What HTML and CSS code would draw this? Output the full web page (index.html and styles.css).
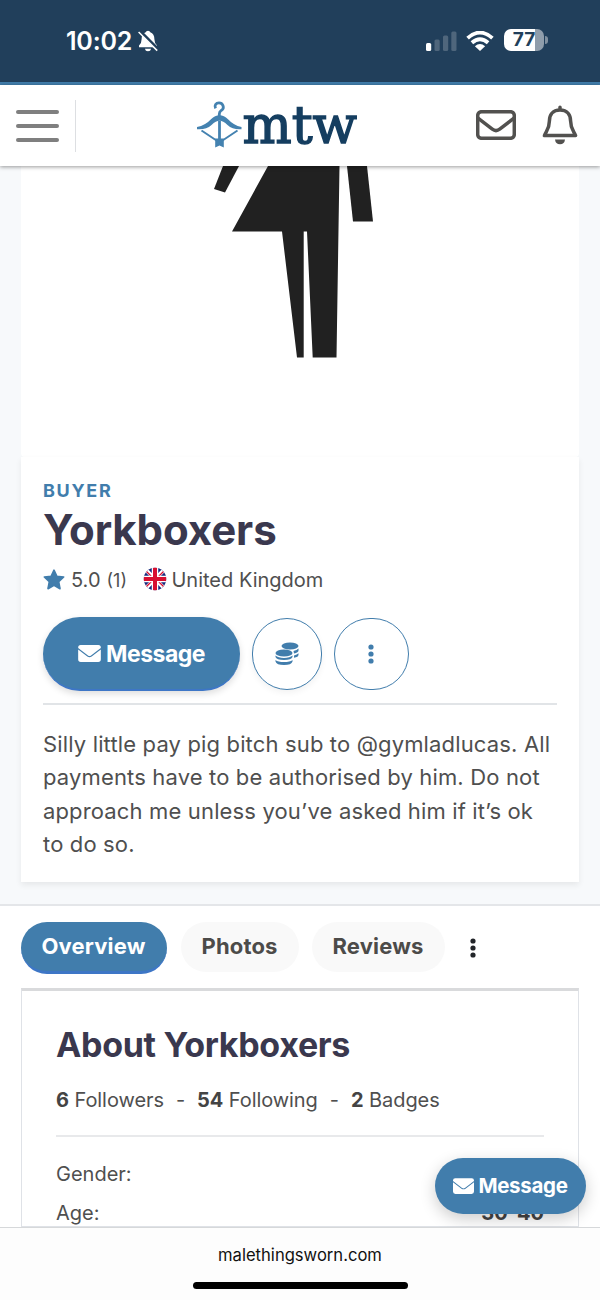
FILE: index.html
```html
<!DOCTYPE html>
<html lang="en">
<head>
<meta charset="utf-8">
<title>Yorkboxers</title>
<link rel="stylesheet" href="styles.css">
</head>
<body>
<svg class="defs" aria-hidden="true">
  <symbol id="mail" viewBox="0 0 24 18"><path d="M2.600 0H21.400Q24 0 24 2.800V3.200L13.600 11.200Q12 12.300 10.400 11.200L0 3.200V2.800Q0 0 2.600 0Z"/><path d="M0 4.700 9.700 12.100Q12 13.600 14.300 12.100L24 4.700V15.200Q24 18 21.200 18H2.800Q0 18 0 15.200Z"/></symbol>
  <symbol id="dots" viewBox="0 0 6 20"><circle cx="3" cy="3" r="2.600"/><circle cx="3" cy="10" r="2.600"/><circle cx="3" cy="17" r="2.600"/></symbol>
</svg>
<div class="screen">
  <div class="status">
    <div class="status-left">
      <span class="clock">10:02</span>
      <svg class="muted" viewBox="0 0 20 22" width="20" height="22"><path fill="#fff" d="M10 .8Q11.900.8 12.300 2.300Q16.400 3.900 16.400 9.200Q16.500 13.500 19 15.600V17.300H1V15.600Q3.600 13.500 3.600 9.200Q3.600 3.900 7.700 2.300Q8.100.8 10 .8ZM6.900 18.700H13.100Q12.600 21.200 10 21.200Q7.400 21.200 6.900 18.700Z"/><path d="M1.400.6 20 19.200" stroke="#213f5b" stroke-width="3.200"/><path d="M.6 2 19.200 20.600" stroke="#fff" stroke-width="1.500"/></svg>
    </div>
    <div class="status-right">
      <svg width="31" height="20" viewBox="0 0 31 20"><rect y="12" width="5.200" height="8" rx="1.500" fill="#fff"/><g fill="#4f667c"><rect x="8.500" y="8.500" width="5.200" height="11.500" rx="1.500"/><rect x="17" y="4.500" width="5.200" height="15.500" rx="1.500"/><rect x="25.300" y="0.500" width="5.200" height="19.500" rx="1.500"/></g></svg>
      <svg class="wifi" width="28" height="20" viewBox="0 0 28 20"><g fill="none" stroke="#fff" stroke-width="3.800"><path d="M1.600 7.200Q14-4 26.400 7.200"/><path d="M5.900 11.700Q14 4.600 22.100 11.700"/></g><path fill="#fff" d="M8.900 15.200Q14 10.900 19.100 15.200L14 20Z"/></svg>
      <span class="battery"><b>77</b></span>
    </div>
  </div>
  <header class="nav">
    <div class="burger"><i></i><i></i><i></i></div>
    <svg class="logo" width="164" height="80" viewBox="0 -13 164 80">
      <g fill="none" stroke="#4482b0"><path stroke-width="2.800" d="M18.600 9.400C17 6.500 19 3.900 22 3.900C26 3.900 27.500 8.500 25.200 10.800C23.500 12.300 22.300 12 22.300 15.200V18"/><path stroke-width="2" d="M4.500 31.500 19.500 41.500M40.500 31.500 25.500 41.500"/><path stroke-width="2.800" d="M22.500 22V42"/></g>
      <path fill="#4482b0" d="M22.500 16.200Q27 16.200 31 20.200Q36.500 26.200 44.500 28V30.200Q36 31 30.500 26Q26 21.800 22.500 21.800Q19 21.800 14.500 26Q9 31 0 30.200V28Q8.500 26.200 14 20.200Q18 16.200 22.500 16.200ZM18.200 39.500H26.800V48.500L22.500 46.500L18.200 48.500Z"/>
      <text x="45.500" y="44" textLength="114.500" lengthAdjust="spacingAndGlyphs">mtw</text>
    </svg>
    <div class="actions">
      <svg width="40" height="30" viewBox="0 0 40 30" fill="none" stroke="#52514f" stroke-width="3.500"><rect x="1.700" y="1.700" width="36.600" height="26.600" rx="3.800"/><path d="M2 8.200 16.300 19.200Q20 22 23.700 19.200L38 8.200"/></svg>
      <svg width="36" height="40" viewBox="0 0 36 40"><path fill="none" stroke="#52514f" stroke-width="3.500" stroke-linejoin="round" stroke-linecap="round" d="M18 2.200V5M18 5C10.500 5 7.400 10.500 7.400 16C7.400 24 4.200 26 2.400 30.600H33.600C31.800 26 28.600 24 28.600 16C28.600 10.500 25.500 5 18 5Z"/><path fill="#52514f" d="M13 34.500H23Q22.500 39.300 18 39.300Q13.500 39.300 13 34.500Z"/></svg>
    </div>
  </header>
  <section class="profile">
    <div class="photo">
      <svg width="558" height="291" viewBox="21 166 558 291"><g fill="#212121"><path d="M223 166H239L225 192.500L214 189Z"/><path d="M268 166H339.500L336.500 357.500H312.700L307 231.500H303.700V357.500H297L282 231.500H232Z"/><path d="M347 166H367L373 221.500H353Z"/></g></svg>
    </div>
    <div class="card">
      <div class="role">BUYER</div>
      <h1>Yorkboxers</h1>
      <div class="meta">
        <svg class="star" width="22" height="21" viewBox="0 0 22 21"><path fill="#417dac" stroke="#417dac" stroke-width="1.600" stroke-linejoin="round" d="M11 1.200 13.800 7.200 20.700 8 15.700 12.700 17 19.700 11 16.300 5 19.700 6.300 12.700 1.300 8 8.200 7.200Z"/></svg>
        <span class="score">5.0</span><span class="count">(1)</span>
        <svg class="flag" width="24" height="24" viewBox="0 0 24 24"><clipPath id="round"><circle cx="12" cy="12" r="11.200"/></clipPath><g clip-path="url(#round)"><path fill="#16297c" d="M0 0H24V24H0Z"/><path stroke="#fff" stroke-width="4" d="M0 0 24 24M24 0 0 24"/><path stroke="#d80f30" stroke-width="1.300" d="M0 1 10 11M24 1 14 11M0 23 10 13M24 23 14 13"/><path stroke="#fff" stroke-width="6.500" d="M12 0V24M0 12H24"/><path stroke="#d80f30" stroke-width="4" d="M12 0V24M0 12H24"/></g></svg>
        <span class="country">United Kingdom</span>
      </div>
      <div class="buttons">
        <button class="primary"><svg width="23" height="17"><use href="#mail"/></svg><span>Message</span></button>
        <button class="ring"><svg width="24" height="24" viewBox="0 0 24 24" fill="#417dac"><ellipse cx="15" cy="4" rx="8.500" ry="3.500"/><ellipse cx="9" cy="11" rx="8.500" ry="3.600"/><path d="M18.500 9Q22 8.300 23.500 6.600V8.500Q23.500 10.600 19 11.600ZM19 13.500Q22 12.800 23.500 11.300V12.700Q23.500 15 19 15.800ZM.5 13.500Q3 15.900 9 15.900Q15 15.900 17.500 13.500V15Q16.500 18 9 18Q1.500 18 .5 15ZM.5 18Q3 20 9 20Q15 20 17.500 18V19.500Q16.500 23 9 23Q1.500 23 .5 19.500Z"/></svg></button>
        <button class="ring wide"><svg width="6" height="20" fill="#417dac"><use href="#dots"/></svg></button>
      </div>
      <p class="bio">Silly little pay pig bitch sub to @gymladlucas. All<br>payments have to be authorised by him. Do not<br>approach me unless you’ve asked him if it’s ok<br>to do so.</p>
    </div>
  </section>
  <nav class="tabs">
    <a class="tab active">Overview</a><a class="tab photos">Photos</a><a class="tab reviews">Reviews</a>
    <svg class="more" width="6" height="20" fill="#222529"><use href="#dots"/></svg>
  </nav>
  <section class="about">
    <h2>About Yorkboxers</h2>
    <div class="stats"><span><b>6</b> Followers</span><span>-</span><span><b>54</b> Following</span><span>-</span><span><b>2</b> Badges</span></div>
    <div class="row"><span>Gender:</span></div>
    <div class="row"><span>Age:</span><b>30-40</b></div>
  </section>
  <button class="floating"><svg width="21" height="16"><use href="#mail"/></svg><span>Message</span></button>
  <footer class="browser"><span>malethingsworn.com</span><i></i></footer>
</div>
</body>
</html>
```
FILE: styles.css
```css
* { box-sizing: border-box; }
body { margin: 0; font-family: Inter, "Liberation Sans", sans-serif; color: #4f4f4f; background: #fff; }
.defs { display: none; }
.screen { position: relative; width: 600px; height: 1300px; overflow: hidden; display: flex; flex-direction: column; }
.screen > * { flex-shrink: 0; }
h1, h2, p { margin: 0; color: #3a384e; }
button { font-family: inherit; padding: 0; border: 0; display: flex; align-items: center; justify-content: center; }

.status { height: 85px; border-bottom: 3px solid #417dab; background: #213f5b; display: flex; justify-content: space-between; padding: 0 56px 0 66px; }
.status-left, .status-right { height: 81px; display: flex; align-items: center; color: #fff; }
.clock { font-size: 25px; font-weight: 600; letter-spacing: -.2px; width: 72px; white-space: nowrap; }
.wifi { margin: 0 10px 0 9px; }
.battery { position: relative; width: 40px; height: 22px; border-radius: 7px; background: linear-gradient(90deg, #fff 31px, #8f9dab 31px); color: #213f5b; font-size: 19px; line-height: 22px; text-align: center; margin-top: -1px; }
.battery::after { content: ""; position: absolute; right: -4px; top: 7px; width: 3px; height: 8px; background: #8090a0; border-radius: 0 4px 4px 0; }

.nav { position: relative; z-index: 2; height: 81px; background: #fff; display: flex; align-items: center; padding: 0 22px 2px 16px; box-shadow: 0 1px 4px #0006; }
.burger { width: 60px; height: 52px; margin-top: 2px; border-right: 1px solid #dddfe2; display: flex; flex-direction: column; justify-content: center; gap: 10px; }
.burger i { width: 43px; height: 4px; border-radius: 2px; background: #7f7f7f; }
.logo { margin: 3px 0 0 121px; }
.logo text { font: 53px "DejaVu Serif", serif; fill: #153e60; stroke: #153e60; stroke-width: 1.5; }
.actions { margin-left: auto; display: flex; align-items: center; gap: 26px; }

.profile { height: 740px; padding: 0 21px; background: #f7f9fb; border-bottom: 2px solid #e4e6e9; }
.photo { height: 291px; background: #fff; border-radius: 0 0 4px 4px; }
.photo svg { display: block; filter: blur(.5px); }
.card { height: 425px; background: #fff; padding: 23px 22px 0; box-shadow: 0 3px 6px #00000012; }
.role { color: #417dac; font-size: 18px; line-height: 22px; font-weight: 700; letter-spacing: 1.7px; }
h1 { font-size: 42px; line-height: 54px; font-weight: 700; margin-top: 1px; letter-spacing: -.1px; }
.meta { height: 45px; padding-top: 1px; display: flex; align-items: center; font-size: 20px; }
.star { margin-top: -2px; }
.score { margin-left: 6px; }
.count { margin-left: 6px; font-size: 18px; }
.flag { margin: 0 4.500px 3px 16px; }
.buttons { height: 103px; border-bottom: 2px solid #e1e4e7; display: flex; gap: 12px; padding-top: 15px; }
.primary { width: 197px; height: 74px; padding-top: 1px; border-radius: 37px; background: #417dac; border-bottom: 2px solid #3d76c6; color: #fff; fill: #fff; font-size: 23px; font-weight: 700; gap: 5px; letter-spacing: -.5px; box-shadow: 0 3px 7px #0002; }
.ring { width: 70px; height: 72px; margin-top: 1px; border: 1.500px solid #417dac; border-radius: 38px; background: #fff; box-shadow: 0 3px 6px #0000000d; }
.wide { width: 75px; margin-left: -.5px; box-shadow: none; }
.bio { margin-top: 22.700px; font-size: 22px; line-height: 33.400px; color: #4f4f4f; letter-spacing: .15px; white-space: nowrap; }

.tabs { height: 82px; padding: 16px 21px 0; display: flex; }
.tab { height: 50px; border-radius: 26px; background: #f9f9f9; font-size: 22px; line-height: 49px; font-weight: 700; letter-spacing: .15px; text-indent: -1px; text-align: center; color: #4c4b49; }
.active { width: 146px; color: #fff; background: #417dac; border-bottom: 3px solid #3d76c6; height: 52px; }
.photos { width: 118px; margin: 0 13px 0 14px; }
.reviews { width: 133px; }
.more { margin: 16px 0 0 25px; }
.about { margin: 0 21px; height: 239px; border: 1px solid #dfe2e7; border-top: 3px solid #d9dadc; padding: 32px 34px 0; overflow: hidden; }
h2 { font-size: 34px; line-height: 44px; font-weight: 700; letter-spacing: -.32px; white-space: nowrap; }
.stats { height: 70px; border-bottom: 2px solid #e8e9eb; display: flex; gap: 12px; font-size: 20px; line-height: 66px; letter-spacing: -.07px; white-space: nowrap; }
.row { display: flex; justify-content: space-between; height: 39px; font-size: 20px; line-height: 39px; position: relative; top: 17.500px; }
b { font-weight: 700; color: #444; }
.battery b { color: #213f5b; font-weight: 700; }
.floating { position: absolute; z-index: 1; left: 435px; top: 1158px; width: 151px; height: 56px; padding-bottom: 1px; border-radius: 28px; background: #417dac; color: #fff; fill: #fff; font-size: 20.500px; font-weight: 700; letter-spacing: -.3px; gap: 4px; box-shadow: 0 5px 16px #0003; }
.browser { position: relative; z-index: 2; height: 73px; border-top: 1px solid #d6d8da; background: #fdfdfd; display: flex; flex-direction: column; align-items: center; color: #111; font-size: 16.600px; line-height: 22px; padding-top: 16px; }
.browser i { width: 215px; height: 7px; background: #000; border-radius: 4px; margin-top: 16px; }
```
